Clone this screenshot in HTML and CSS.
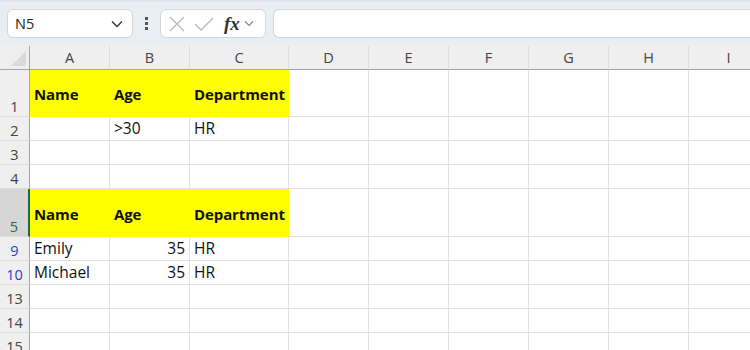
FILE: index.html
```html
<!DOCTYPE html>
<html lang="en">

<head>
    <meta charset="UTF-8">
    <title>Sheet</title>
    <link rel="stylesheet" href="styles.css">
</head>

<body>
    <div class="toolbar">
        <div class="namebox">
            <span>N5</span>
            <svg width="12" height="8" viewBox="0 0 12 8"><path d="M1 1.5 L6 6.5 L11 1.5" fill="none" stroke="#333" stroke-width="1.4"/></svg>
        </div>
        <div class="dots"><i></i><i></i><i></i></div>
        <div class="fxbox">
            <svg width="18" height="18" viewBox="0 0 18 18"><path d="M2 2 L16 16 M16 2 L2 16" stroke="#b8b8b8" stroke-width="1.3"/></svg>
            <svg width="20" height="18" viewBox="0 0 20 18"><path d="M1 9 L7 15 L19 3" fill="none" stroke="#b8b8b8" stroke-width="1.3"/></svg>
            <span class="fx">fx</span>
            <svg width="10" height="7" viewBox="0 0 10 7"><path d="M1 1.5 L5 5.5 L9 1.5" fill="none" stroke="#888" stroke-width="1.2"/></svg>
        </div>
        <div class="formula"></div>
    </div>

    <div class="sheet">
        <div class="corner"><div class="tri"></div></div>
        <div class="colhead">A</div>
        <div class="colhead">B</div>
        <div class="colhead">C</div>
        <div class="colhead">D</div>
        <div class="colhead">E</div>
        <div class="colhead">F</div>
        <div class="colhead">G</div>
        <div class="colhead">H</div>
        <div class="colhead">I</div>

        <div class="rowhead tall">1</div>
        <div class="cell tall hl bold">Name</div>
        <div class="cell tall hl bold">Age</div>
        <div class="cell tall hl bold">Department</div>
        <div class="cell tall"></div><div class="cell tall"></div><div class="cell tall"></div><div class="cell tall"></div><div class="cell tall"></div><div class="cell tall"></div>

        <div class="rowhead">2</div>
        <div class="cell"></div>
        <div class="cell">&gt;30</div>
        <div class="cell">HR</div>
        <div class="cell"></div><div class="cell"></div><div class="cell"></div><div class="cell"></div><div class="cell"></div><div class="cell"></div>

        <div class="rowhead">3</div>
        <div class="cell"></div><div class="cell"></div><div class="cell"></div><div class="cell"></div><div class="cell"></div><div class="cell"></div><div class="cell"></div><div class="cell"></div><div class="cell"></div>

        <div class="rowhead">4</div>
        <div class="cell"></div><div class="cell"></div><div class="cell"></div><div class="cell"></div><div class="cell"></div><div class="cell"></div><div class="cell"></div><div class="cell"></div><div class="cell"></div>

        <div class="rowhead tall active">5</div>
        <div class="cell tall hl bold">Name</div>
        <div class="cell tall hl bold">Age</div>
        <div class="cell tall hl bold">Department</div>
        <div class="cell tall"></div><div class="cell tall"></div><div class="cell tall"></div><div class="cell tall"></div><div class="cell tall"></div><div class="cell tall"></div>

        <div class="rowhead filtered">9</div>
        <div class="cell">Emily</div>
        <div class="cell num">35</div>
        <div class="cell">HR</div>
        <div class="cell"></div><div class="cell"></div><div class="cell"></div><div class="cell"></div><div class="cell"></div><div class="cell"></div>

        <div class="rowhead filtered">10</div>
        <div class="cell">Michael</div>
        <div class="cell num">35</div>
        <div class="cell">HR</div>
        <div class="cell"></div><div class="cell"></div><div class="cell"></div><div class="cell"></div><div class="cell"></div><div class="cell"></div>

        <div class="rowhead">13</div>
        <div class="cell"></div><div class="cell"></div><div class="cell"></div><div class="cell"></div><div class="cell"></div><div class="cell"></div><div class="cell"></div><div class="cell"></div><div class="cell"></div>

        <div class="rowhead">14</div>
        <div class="cell"></div><div class="cell"></div><div class="cell"></div><div class="cell"></div><div class="cell"></div><div class="cell"></div><div class="cell"></div><div class="cell"></div><div class="cell"></div>

        <div class="rowhead">15</div>
        <div class="cell"></div><div class="cell"></div><div class="cell"></div><div class="cell"></div><div class="cell"></div><div class="cell"></div><div class="cell"></div><div class="cell"></div><div class="cell"></div>
    </div>
</body>

</html>
```

FILE: styles.css
```css
* {
    padding: 0;
    margin: 0;
    box-sizing: border-box;
}

body {
    width: 750px;
    height: 350px;
    overflow: hidden;
    background-color: #ffffff;
    font-family: "Open Sans", "Noto Sans", sans-serif;
}

.toolbar {
    display: flex;
    align-items: center;
    height: 46px;
    padding: 0 0 1px 7px;
    background-color: #e9eef2;
    border-top: 2px solid #e0e5e9;
}

.namebox {
    display: flex;
    align-items: center;
    justify-content: space-between;
    width: 126px;
    height: 29px;
    padding: 0 9px 0 7px;
    background-color: #ffffff;
    border: 1px solid #d2d6da;
    border-radius: 6px;
    font-size: 14.5px;
    color: #222;
}

.dots {
    display: flex;
    flex-direction: column;
    gap: 2px;
    margin: 0 12px 0 12px;
}

.dots i {
    display: block;
    width: 3px;
    height: 3px;
    background-color: #555;
}

.fxbox {
    display: flex;
    align-items: center;
    width: 106px;
    height: 29px;
    padding: 0 0 0 7px;
    gap: 8px;
    background-color: #ffffff;
    border: 1px solid #d2d6da;
    border-radius: 6px;
}

.fx {
    font-family: "Liberation Serif", serif;
    font-style: italic;
    font-weight: bold;
    font-size: 19px;
    color: #333;
    margin-left: 2px;
    margin-right: -4px;
}

.formula {
    flex: 1;
    height: 29px;
    margin-left: 7px;
    background-color: #ffffff;
    border: 1px solid #d2d6da;
    border-right: none;
    border-radius: 6px 0 0 6px;
}

.sheet {
    display: grid;
    grid-template-columns: 30px 80px 80px 99px 80px 80px 80px 80px 80px 80px;
    grid-template-rows: 24px 47px 24px 24px 24px 48px 24px 24px 24px 24px 24px;
}

.corner {
    background-color: #efefef;
    border-right: 1px solid #a6a6a6;
    border-bottom: 1px solid #a6a6a6;
    display: flex;
    justify-content: flex-end;
    align-items: flex-end;
    padding: 0 3px 3px 0;
}

.tri {
    width: 15px;
    height: 15px;
    background-color: #dadada;
    clip-path: polygon(100% 0, 100% 100%, 0 100%);
}

.colhead {
    display: flex;
    align-items: center;
    justify-content: center;
    background-color: #efefef;
    border-right: 1px solid #dcdcdc;
    border-bottom: 1px solid #a6a6a6;
    font-size: 14.5px;
    color: #444;
}

.rowhead {
    display: flex;
    align-items: flex-end;
    justify-content: center;
    padding-bottom: 0;
    background-color: #efefef;
    border-right: 1px solid #a6a6a6;
    border-bottom: 1px solid #dcdcdc;
    font-size: 14.5px;
    color: #444;
}

.rowhead.active {
    background-color: #d6d6d6;
    border-right: 2px solid #1e6b41;
    color: #1e6b41;
}

.rowhead.filtered {
    color: #1f3fd6;
}

.cell {
    display: flex;
    align-items: flex-end;
    padding: 0 4px 1px 4px;
    border-right: 1px solid #e1e1e1;
    border-bottom: 1px solid #e1e1e1;
    font-size: 15.5px;
    color: #111;
    white-space: nowrap;
}

.cell.tall {
    padding-bottom: 12px;
}

.cell.hl {
    background-color: #ffff00;
    border-right-color: #ffff00;
    border-bottom-color: #ffff00;
}

.cell.bold {
    font-size: 15px;
    font-weight: bold;
    letter-spacing: -0.1px;
}

.cell.num {
    justify-content: flex-end;
}
```
